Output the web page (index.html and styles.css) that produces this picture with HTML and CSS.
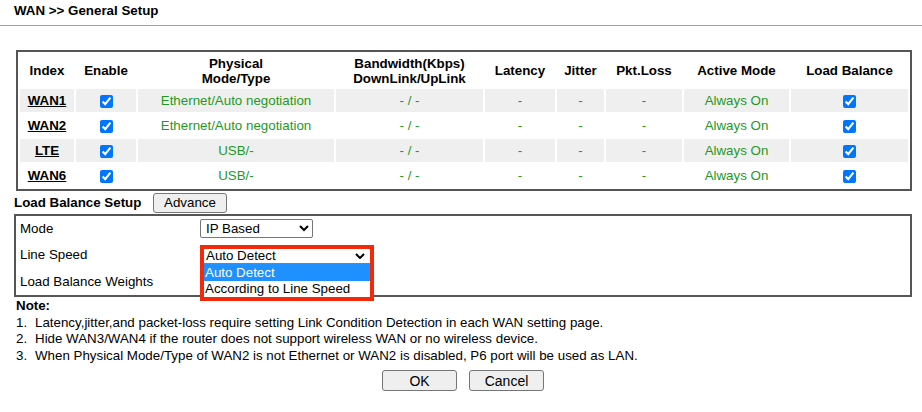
FILE: index.html
```html
<!DOCTYPE html>
<html>
<head>
<meta charset="utf-8">
<title>WAN General Setup</title>
<link rel="stylesheet" href="styles.css">
</head>
<body>
<div class="title">WAN &gt;&gt; General Setup</div>
<table class="wan">
  <colgroup>
    <col class="c1"><col class="c2"><col class="c3"><col class="c4"><col class="c5"><col class="c6"><col class="c7"><col class="c8"><col class="c9">
  </colgroup>
  <thead>
    <tr>
      <th>Index</th><th>Enable</th><th>Physical<br>Mode/Type</th><th>Bandwidth(Kbps)<br>DownLink/UpLink</th><th>Latency</th><th>Jitter</th><th>Pkt.Loss</th><th>Active Mode</th><th>Load Balance</th>
    </tr>
  </thead>
  <tbody>
    <tr class="alt">
      <td><a href="#">WAN1</a></td><td><input type="checkbox" checked></td><td>Ethernet/Auto negotiation</td><td>- / -</td><td>-</td><td>-</td><td>-</td><td>Always On</td><td><input type="checkbox" checked></td>
    </tr>
    <tr>
      <td><a href="#">WAN2</a></td><td><input type="checkbox" checked></td><td>Ethernet/Auto negotiation</td><td>- / -</td><td>-</td><td>-</td><td>-</td><td>Always On</td><td><input type="checkbox" checked></td>
    </tr>
    <tr class="alt">
      <td><a href="#">LTE</a></td><td><input type="checkbox" checked></td><td>USB/-</td><td>- / -</td><td>-</td><td>-</td><td>-</td><td>Always On</td><td><input type="checkbox" checked></td>
    </tr>
    <tr>
      <td><a href="#">WAN6</a></td><td><input type="checkbox" checked></td><td>USB/-</td><td>- / -</td><td>-</td><td>-</td><td>-</td><td>Always On</td><td><input type="checkbox" checked></td>
    </tr>
  </tbody>
</table>

<div class="lbbar">
  <span class="lbtitle">Load Balance Setup</span>
  <button class="btn" type="button">Advance</button>
</div>

<div class="lbbox">
  <div class="lbl">Mode</div>
  <div class="val">
    <select class="mode-select">
      <option>IP Based</option>
    </select>
  </div>
  <div class="lbl">Line Speed</div>
  <div class="val ls">
    <div class="dd">
      <div class="dd-face">
        <span>Auto Detect</span>
        <svg class="chev" width="10" height="6" viewBox="0 0 10 6"><path d="M1 1l4 4 4-4" fill="none" stroke="#000" stroke-width="2"/></svg>
      </div>
      <div class="dd-opt sel">Auto Detect</div>
      <div class="dd-opt">According to Line Speed</div>
    </div>
  </div>
  <div class="lbl">Load Balance Weights</div>
  <div class="val"></div>
</div>

<div class="note">
  <div class="note-title">Note:</div>
  <div class="note-item"><span class="num">1.</span><span>Latency,jitter,and packet-loss require setting Link Condition Detection in each WAN setting page.</span></div>
  <div class="note-item"><span class="num">2.</span><span>Hide WAN3/WAN4 if the router does not support wireless WAN or no wireless device.</span></div>
  <div class="note-item"><span class="num">3.</span><span>When Physical Mode/Type of WAN2 is not Ethernet or WAN2 is disabled, P6 port will be used as LAN.</span></div>
</div>

<div class="actions">
  <button class="btn btn-lg" type="button">OK</button>
  <button class="btn btn-lg" type="button">Cancel</button>
</div>
</body>
</html>
```

FILE: styles.css
```css
body {
  margin: 0;
  font-family: "Liberation Sans", Arial, sans-serif;
  font-size: 13.33px;
  color: #000;
  background: #fff;
}

.title {
  padding: 3px 0 7px 14px;
  line-height: 15px;
  font-weight: bold;
  border-bottom: 1px solid #a0a0a0;
}

.wan {
  margin: 24px 0 0 16px;
  width: 896px;
  table-layout: fixed;
  border-collapse: separate;
  border-spacing: 2px;
  border: 2px solid #555;
  font-size: 13.33px;
}

.wan .c1 { width: 54px; }
.wan .c2 { width: 60px; }
.wan .c3 { width: 196px; }
.wan .c4 { width: 147px; }
.wan .c5 { width: 70px; }
.wan .c6 { width: 47px; }
.wan .c7 { width: 76px; }
.wan .c8 { width: 105px; }
.wan .c9 { width: 117px; }

.wan th {
  height: 33px;
  padding: 0;
  font-weight: bold;
  line-height: 15px;
  text-align: center;
}

.wan td {
  height: 23px;
  padding: 0;
  text-align: center;
  color: #1f991f;
  line-height: 15px;
}

.wan tr.alt td {
  background: #efefef;
}

.wan td a {
  color: #000;
  font-weight: bold;
  text-decoration: underline;
}

.wan input[type="checkbox"] {
  margin: 0;
  width: 13px;
  height: 13px;
  vertical-align: middle;
}

.lbbar {
  display: flex;
  align-items: center;
  height: 23px;
  margin-left: 14px;
}

.lbtitle {
  font-weight: bold;
  width: 139px;
}

.btn {
  width: 74px;
  height: 20px;
  padding: 0;
  font-family: "Liberation Sans", Arial, sans-serif;
  font-size: 13.33px;
  color: #000;
  background: #efefef;
  border: 1px solid #767676;
  border-radius: 3px;
}

.btn-lg {
  width: 75px;
  height: 21px;
  font-size: 14px;
}

.lbbox {
  margin-left: 14px;
  width: 898px;
  box-sizing: border-box;
  border: 2px solid #555;
  display: grid;
  grid-template-columns: 184px 1fr;
  grid-template-rows: 25px 26px 28px;
  align-items: center;
}

.lbl {
  padding-left: 4px;
}

.val {
  height: 100%;
  display: flex;
  align-items: center;
}

.mode-select {
  width: 113px;
  height: 19px;
  font-family: "Liberation Sans", Arial, sans-serif;
  font-size: 13.33px;
  color: #000;
  background: #fff;
  border: 1px solid #767676;
  border-radius: 2px;
  padding: 0 0 0 1px;
}

.ls {
  position: relative;
}

.dd {
  position: absolute;
  top: 4px;
  left: 0;
  width: 174px;
  box-sizing: border-box;
  border: 4px solid #f3290c;
  background: #fff;
  font-size: 13.33px;
  z-index: 2;
}

.dd-face {
  height: 14px;
  border-bottom: 1px solid #808080;
  display: flex;
  align-items: center;
  justify-content: space-between;
  padding: 0 5px 0 2px;
  line-height: 14px;
}

.chev {
  display: block;
}

.dd-opt {
  height: 17px;
  line-height: 17px;
  padding-left: 1px;
}

.dd-opt + .dd-opt {
  height: 16px;
  line-height: 16px;
}

.dd-opt.sel {
  background: #1e90ff;
  color: #fff;
}

.note {
  margin: 1px 0 0 16px;
  line-height: 16.5px;
}

.note-title {
  font-weight: bold;
}

.note-item {
  display: flex;
}

.num {
  width: 19px;
  flex: none;
}

.actions {
  display: flex;
  justify-content: center;
  gap: 12px;
  width: 898px;
  margin: 6px 0 0 14px;
}
```
